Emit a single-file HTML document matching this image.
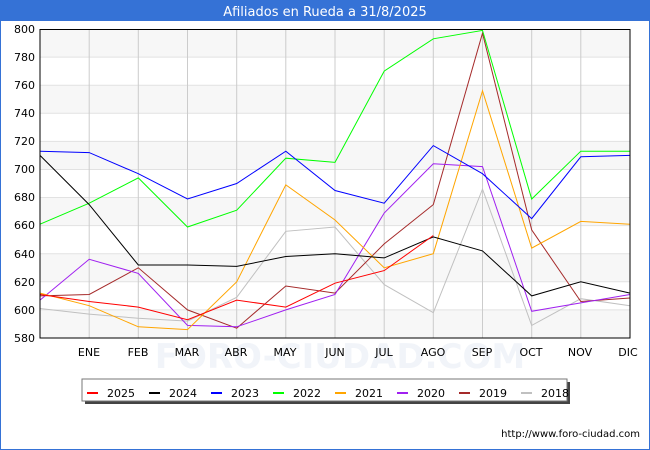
<!DOCTYPE html><html><head><style>body{margin:0;width:650px;height:450px;background:#fff;overflow:hidden}</style></head><body>
<svg width="650" height="450" xmlns="http://www.w3.org/2000/svg" font-family="DejaVu Sans, Liberation Sans, sans-serif" style="display:block">
<rect x="0" y="0" width="650" height="450" fill="#fff"/>
<rect x="0.5" y="0" width="649" height="449.5" fill="none" stroke="#3572d6"/>
<rect x="0" y="0" width="650" height="21" fill="#3572d6"/>
<text x="325" y="16" fill="#fff" font-size="13" text-anchor="middle">Afiliados en Rueda a 31/8/2025</text>
<g fill="#f7f7f7">
<rect x="40" y="29" width="590" height="28.1"/><rect x="40" y="85.2" width="590" height="28.1"/><rect x="40" y="141.4" width="590" height="28.1"/><rect x="40" y="197.5" width="590" height="28.1"/><rect x="40" y="253.7" width="590" height="28.1"/><rect x="40" y="309.9" width="590" height="28.1"/>
</g>
<g stroke="#e2e2e2">
<line x1="40" x2="630" y1="57.1" y2="57.1"/><line x1="40" x2="630" y1="85.2" y2="85.2"/><line x1="40" x2="630" y1="113.3" y2="113.3"/><line x1="40" x2="630" y1="141.4" y2="141.4"/><line x1="40" x2="630" y1="169.5" y2="169.5"/><line x1="40" x2="630" y1="197.5" y2="197.5"/><line x1="40" x2="630" y1="225.6" y2="225.6"/><line x1="40" x2="630" y1="253.7" y2="253.7"/><line x1="40" x2="630" y1="281.8" y2="281.8"/><line x1="40" x2="630" y1="309.9" y2="309.9"/>
</g>
<g stroke="#cccccc">
<line x1="89.2" x2="89.2" y1="29" y2="338"/><line x1="138.3" x2="138.3" y1="29" y2="338"/><line x1="187.5" x2="187.5" y1="29" y2="338"/><line x1="236.7" x2="236.7" y1="29" y2="338"/><line x1="285.8" x2="285.8" y1="29" y2="338"/><line x1="335" x2="335" y1="29" y2="338"/><line x1="384.2" x2="384.2" y1="29" y2="338"/><line x1="433.3" x2="433.3" y1="29" y2="338"/><line x1="482.5" x2="482.5" y1="29" y2="338"/><line x1="531.7" x2="531.7" y1="29" y2="338"/><line x1="580.8" x2="580.8" y1="29" y2="338"/>
</g>
<text x="340" y="368" font-size="34" fill="#f1f4f9" text-anchor="middle" font-weight="bold">FORO-CIUDAD.COM</text>
<g font-size="11" text-anchor="end" fill="#000">
<text x="35" y="33">800</text><text x="35" y="61">780</text><text x="35" y="89">760</text><text x="35" y="117">740</text><text x="35" y="145">720</text><text x="35" y="173">700</text><text x="35" y="201">680</text><text x="35" y="229">660</text><text x="35" y="258">640</text><text x="35" y="286">620</text><text x="35" y="314">600</text><text x="35" y="342">580</text>
</g>
<g font-size="11" text-anchor="middle" fill="#000">
<text x="89" y="356">ENE</text><text x="138" y="356">FEB</text><text x="187" y="356">MAR</text><text x="236" y="356">ABR</text><text x="285" y="356">MAY</text><text x="335" y="356">JUN</text><text x="384" y="356">JUL</text><text x="433" y="356">AGO</text><text x="482" y="356">SEP</text><text x="531" y="356">OCT</text><text x="580" y="356">NOV</text><text x="628" y="356">DIC</text>
</g>
<g fill="none" stroke-width="1">
<polyline stroke="#c0c0c0" points="40,308.5 89.2,314.1 138.3,318.3 187.5,321.1 236.7,297.3 285.8,231.3 335,227 384.2,284.6 433.3,312.7 482.5,189.1 531.7,325.4 580.8,298.7 630,305.7"/>
<polyline stroke="#a52a2a" points="40,295.9 89.2,294.5 138.3,267.8 187.5,309.9 236.7,328.2 285.8,286 335,293.1 384.2,243.9 433.3,204.6 482.5,33.2 531.7,229.9 580.8,301.5 630,298"/>
<polyline stroke="#a020f0" points="40,300.1 89.2,259.3 138.3,273.4 187.5,325.4 236.7,326.8 285.8,309.9 335,294.5 384.2,213 433.3,163.8 482.5,166.6 531.7,311.3 580.8,302.9 630,294.5"/>
<polyline stroke="#ffa500" points="40,293.1 89.2,305.7 138.3,326.8 187.5,329.6 236.7,281.8 285.8,184.9 335,220 384.2,267.8 433.3,253.7 482.5,90.8 531.7,248.1 580.8,221.4 630,224.2"/>
<polyline stroke="#00ff00" points="40,224.2 89.2,203.2 138.3,177.9 187.5,227 236.7,210.2 285.8,158.2 335,162.4 384.2,71.1 433.3,38.8 482.5,30.4 531.7,199 580.8,151.2 630,151.2"/>
<polyline stroke="#0000ff" points="40,151.2 89.2,152.6 138.3,173.7 187.5,199 236.7,183.5 285.8,151.2 335,190.5 384.2,203.2 433.3,145.6 482.5,173.7 531.7,218.6 580.8,156.8 630,155.4"/>
<polyline stroke="#000000" points="40,155.4 89.2,204.6 138.3,265 187.5,265 236.7,266.4 285.8,256.5 335,253.7 384.2,257.9 433.3,236.9 482.5,250.9 531.7,295.9 580.8,281.8 630,293.1"/>
<polyline stroke="#ff0000" points="40,294.5 89.2,301.5 138.3,307.1 187.5,319.7 236.7,300.1 285.8,307.1 335,283.2 384.2,270.6 433.3,235.5"/>
</g>
<rect x="40" y="29.5" width="590" height="308.5" fill="none" stroke="#000"/>
<rect x="85" y="382" width="485" height="22" fill="#444"/>
<rect x="82" y="379" width="485" height="22" fill="#fff" stroke="#777"/>
<g font-size="11" fill="#000">
<rect x="87" y="392" width="11" height="2" fill="#ff0000"/><text x="107" y="397">2025</text>
<rect x="149" y="392" width="11" height="2" fill="#000"/><text x="169" y="397">2024</text>
<rect x="211" y="392" width="11" height="2" fill="#0000ff"/><text x="231" y="397">2023</text>
<rect x="273" y="392" width="11" height="2" fill="#00ff00"/><text x="293" y="397">2022</text>
<rect x="335" y="392" width="11" height="2" fill="#ffa500"/><text x="355" y="397">2021</text>
<rect x="397" y="392" width="11" height="2" fill="#a020f0"/><text x="417" y="397">2020</text>
<rect x="459" y="392" width="11" height="2" fill="#a52a2a"/><text x="479" y="397">2019</text>
<rect x="521" y="392" width="11" height="2" fill="#c0c0c0"/><text x="541" y="397">2018</text>
</g>
<text x="640" y="437" font-size="10" text-anchor="end" fill="#000">http://www.foro-ciudad.com</text>
</svg></body></html>
